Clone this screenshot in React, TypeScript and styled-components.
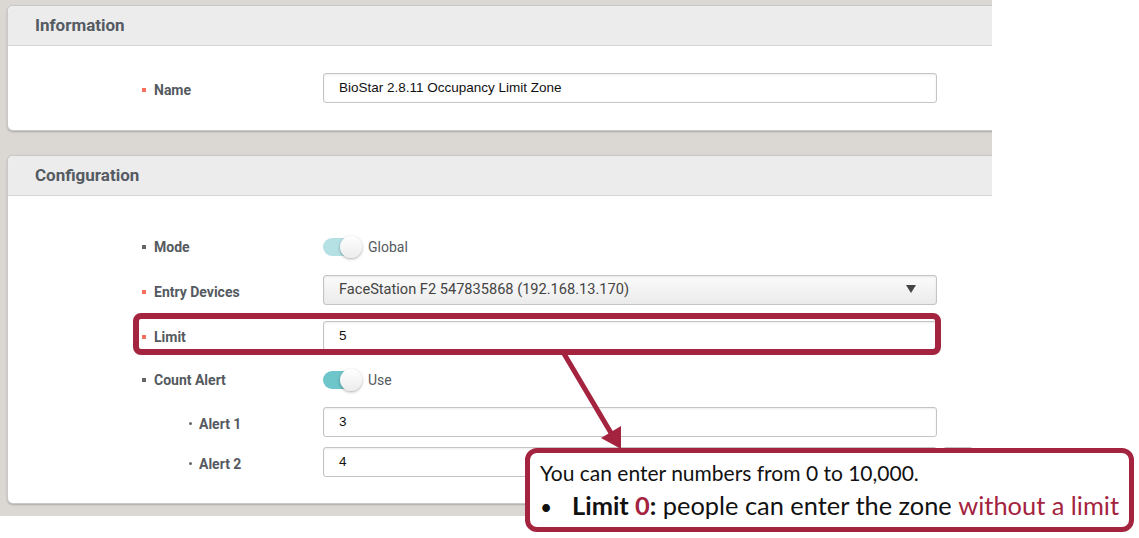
import React, { FC } from 'react';
import styled, { createGlobalStyle } from 'styled-components';

const GlobalStyle = createGlobalStyle`
	body{
		margin:0;
		background:#fff;
		font-family:Roboto, 'Liberation Sans', sans-serif;
	}
`;

const accent = '#a4233f';

const Stage = styled.div`
	position:relative;
	width:1139px;
	height:538px;
	overflow:hidden;
	background:#fff;
`;

const Backdrop = styled.div`
	width:992px;
	height:516px;
	box-sizing:border-box;
	padding:5px 0 0 7px;
	background:#dbd7d3;
	overflow:hidden;
	display:flex;
	flex-direction:column;
	gap:24px;
`;

const Card = styled.section`
	width:1000px;
	background:#fff;
	border:1px solid #c9c9c9;
	border-radius:6px;
	box-shadow:0 1px 2px rgba(0,0,0,0.22);
	box-sizing:border-box;
	flex-shrink:0;
`;

const CardHeader = styled.div`
	height:40px;
	box-sizing:border-box;
	display:flex;
	align-items:center;
	padding:0 0 2px 27px;
	background:#ececec;
	border-bottom:1px solid #d6d6d6;
	border-radius:6px 6px 0 0;
	font-size:17px;
	font-weight:700;
	color:#555b63;
`;

const CardBody = styled.div<{ padTop: number; padBottom: number }>`
	display:flex;
	flex-direction:column;
	padding-top:${p => p.padTop}px;
	padding-bottom:${p => p.padBottom}px;
`;

const Row = styled.div<{ gapTop?: number }>`
	display:flex;
	align-items:center;
	margin-top:${p => p.gapTop || 0}px;
`;

const Label = styled.div<{ indent: number; drop: number }>`
	width:315px;
	box-sizing:border-box;
	padding-left:${p => p.indent}px;
	padding-top:${p => p.drop}px;
	display:flex;
	align-items:center;
	font-size:14px;
	font-weight:700;
	color:#555a60;
`;

const Bullet = styled.span<{ required?: boolean; sub?: boolean }>`
	width:${p => p.sub ? 3 : 4}px;
	height:${p => p.sub ? 3 : 4}px;
	border-radius:${p => p.sub ? '50%' : '0'};
	margin-right:${p => p.sub ? 7 : 8}px;
	background:${p => p.required ? '#f2705c' : '#666'};
	flex-shrink:0;
`;

const TextInput = styled.div`
	width:614px;
	height:30px;
	box-sizing:border-box;
	border:1px solid #c4c4c4;
	border-radius:3px;
	box-shadow:inset 0 1px 2px rgba(0,0,0,0.08);
	display:flex;
	align-items:center;
	padding:0 0 2px 15px;
	font-family:'Liberation Sans', Arial, sans-serif;
	font-size:13.5px;
	color:#111;
`;

const Select = styled(TextInput)`
	background:linear-gradient(#fbfbfb, #ebebeb);
	font-family:Roboto, sans-serif;
	font-size:14.6px;
	color:#444;
	justify-content:space-between;
	padding-right:20px;
`;

const Caret = styled.span`
	width:0;
	height:0;
	border-left:5px solid transparent;
	border-right:5px solid transparent;
	border-top:8px solid #444;
`;

const SideButton = styled.div`
	width:30px;
	height:30px;
	margin-left:6px;
	box-sizing:border-box;
	border:1px solid #c4c4c4;
	border-radius:3px;
	background:linear-gradient(#fbfbfb, #ececec);
`;

const ToggleWrap = styled.div`
	display:flex;
	align-items:center;
	gap:7px;
	font-size:14px;
	color:#555a60;
	height:22px;
`;

const Track = styled.div<{ tone: string }>`
	position:relative;
	width:38px;
	height:18px;
	border-radius:9px;
	background:${p => p.tone};
`;

const Knob = styled.div`
	position:absolute;
	right:-1px;
	top:-2px;
	width:22px;
	height:22px;
	border-radius:50%;
	background:linear-gradient(#fff, #ececec);
	box-shadow:0 1px 3px rgba(0,0,0,0.35);
`;

const LimitHighlight = styled.div`
	position:absolute;
	left:133px;
	top:313px;
	width:808px;
	height:42px;
	box-sizing:border-box;
	border:6px solid ${accent};
	border-radius:8px;
`;

const ArrowSvg = styled.svg`
	position:absolute;
	left:550px;
	top:350px;
`;

const Callout = styled.div`
	position:absolute;
	left:525px;
	top:448px;
	width:609px;
	height:84px;
	box-sizing:border-box;
	border:5px solid ${accent};
	border-radius:12px;
	background:#fff;
	padding:3px 0 0 10px;
	font-family:Lato, 'Open Sans', sans-serif;
	color:#111;
`;

const CalloutLine = styled.div<{ size: number }>`
	display:flex;
	align-items:baseline;
	white-space:nowrap;
	font-size:${p => p.size}px;
	line-height:33px;
`;

const Dot = styled.span`
	width:32px;
	font-size:21px;
`;

const Em = styled.span`
	color:${accent};
`;

interface IToggle {
	tone: string;
	text: string;
}

const Toggle: FC<IToggle> = ({ tone, text }) => (
	<ToggleWrap>
		<Track tone={tone}><Knob /></Track>
		{text}
	</ToggleWrap>
);

interface IField {
	label: string;
	required?: boolean;
	sub?: boolean;
	gapTop?: number;
	drop?: number;
	children: React.ReactNode;
}

const Field: FC<IField> = ({ label, required, sub, gapTop, drop = 3, children }) => (
	<Row gapTop={gapTop}>
		<Label indent={sub ? 181 : 134} drop={drop}>
			<Bullet required={required} sub={sub} />
			{label}
		</Label>
		{children}
	</Row>
);

const App: FC = () => {
	return (
		<Stage>
			<GlobalStyle />
			<Backdrop>
				<Card>
					<CardHeader>Information</CardHeader>
					<CardBody padTop={27} padBottom={27}>
						<Field label='Name' required>
							<TextInput>BioStar 2.8.11 Occupancy Limit Zone</TextInput>
						</Field>
					</CardBody>
				</Card>
				<Card>
					<CardHeader>Configuration</CardHeader>
					<CardBody padTop={40} padBottom={26}>
						<Field label='Mode' drop={0}>
							<Toggle tone='#b5e1e4' text='Global' />
						</Field>
						<Field label='Entry Devices' required gapTop={17}>
							<Select>
								FaceStation F2 547835868 (192.168.13.170)
								<Caret />
							</Select>
						</Field>
						<Field label='Limit' required gapTop={16} drop={2}>
							<TextInput>5</TextInput>
						</Field>
						<Field label='Count Alert' gapTop={18} drop={0}>
							<Toggle tone='#6ec5ca' text='Use' />
						</Field>
						<Field label='Alert 1' sub gapTop={16}>
							<TextInput>3</TextInput>
						</Field>
						<Field label='Alert 2' sub gapTop={10}>
							<TextInput>4</TextInput>
							<SideButton />
						</Field>
					</CardBody>
				</Card>
			</Backdrop>

			<LimitHighlight />
			<ArrowSvg width='80' height='102' viewBox='0 0 80 102'>
				<line x1='13' y1='2' x2='64' y2='88' stroke={accent} strokeWidth='5' />
				<polygon points='71,99 51,88 71,76' fill={accent} />
			</ArrowSvg>
			<Callout>
				<CalloutLine size={21}>You can enter numbers from 0 to 10,000.</CalloutLine>
				<CalloutLine size={25.4}>
					<Dot>•</Dot>
					<b>Limit <Em>0</Em>:</b>&nbsp;people can enter the zone&nbsp;<Em>without a limit</Em>
				</CalloutLine>
			</Callout>
		</Stage>
	);
};

export default App;
